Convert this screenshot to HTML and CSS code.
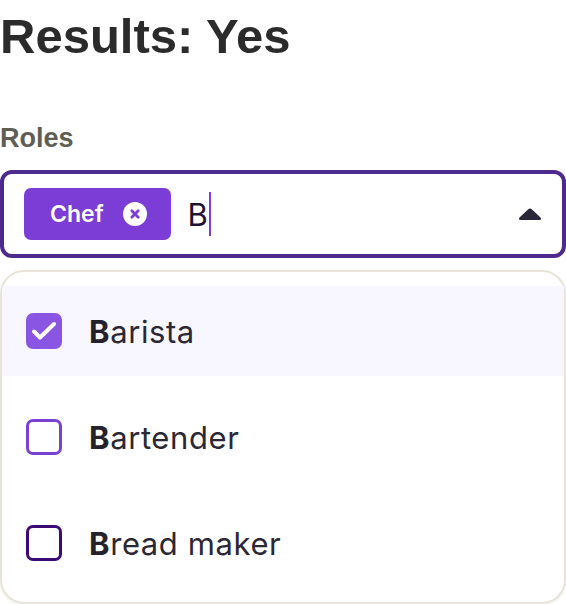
FILE: index.html
```html
<!DOCTYPE html>
<html lang="en">
<head>
<meta charset="utf-8">
<title>Results</title>
<link rel="stylesheet" href="styles.css">
</head>
<body>
<main class="page">
  <h1 class="title">Results: Yes</h1>
  <label class="label">Roles</label>
  <div class="combo">
    <span class="chip">
      <span class="chip-text">Chef</span>
      <svg class="chip-x" width="24" height="24" viewBox="0 0 24 24" aria-hidden="true">
        <circle cx="12" cy="12" r="12" fill="#ffffff"/>
        <path d="M8.8 8.8 L15.2 15.2 M15.2 8.8 L8.8 15.2" stroke="#7b3dd6" stroke-width="2.8" stroke-linecap="round"/>
      </svg>
    </span>
    <span class="typed">B</span><span class="cursor"></span>
    <svg class="caret" width="24" height="14" viewBox="0 0 24 14" aria-hidden="true">
      <path d="M12 1.5 Q13 1.5 14 2.5 L22.5 10.5 Q24 12.5 21.5 13 L2.5 13 Q0 12.5 1.5 10.5 L10 2.5 Q11 1.5 12 1.5 Z" fill="#2a2838"/>
    </svg>
  </div>
  <ul class="list">
    <li class="option active">
      <span class="box checked">
        <svg width="36" height="36" viewBox="0 0 36 36" aria-hidden="true">
          <path d="M8 18.5 L14 24.5 L28 11" fill="none" stroke="#ffffff" stroke-width="4" stroke-linecap="round" stroke-linejoin="round"/>
        </svg>
      </span>
      <span class="name"><b>B</b>arista</span>
    </li>
    <li class="option">
      <span class="box"></span>
      <span class="name"><b>B</b>artender</span>
    </li>
    <li class="option">
      <span class="box dark"></span>
      <span class="name"><b>B</b>read maker</span>
    </li>
  </ul>
</main>
</body>
</html>
```
FILE: styles.css
```css
* { box-sizing: border-box; }
html, body { margin: 0; padding: 0; background: #ffffff; }
body { font-family: "Inter", "Open Sans", sans-serif; }

.page { width: 566px; }

.title {
  margin: 8px 0 0;
  font-family: "Liberation Sans", Arial, sans-serif;
  font-weight: 700;
  font-size: 49px;
  line-height: 56px;
  color: #2b2b2b;
}

.label {
  display: block;
  margin-top: 58px;
  font-family: "Liberation Sans", Arial, sans-serif;
  font-weight: 700;
  font-size: 27px;
  line-height: 32px;
  color: #5f5e55;
}

.combo {
  margin-top: 16px;
  height: 88px;
  border: 4px solid #4e2a8e;
  border-radius: 12px;
  padding: 14px 20px;
  display: flex;
  align-items: center;
}

.chip {
  display: flex;
  align-items: center;
  height: 52px;
  padding: 0 24px 0 26px;
  background: #7b3dd6;
  border-radius: 7px;
  gap: 19px;
}
.chip-text {
  color: #ffffff;
  font-weight: 600;
  font-size: 23px;
}
.chip-x { display: block; }

.typed {
  margin-left: 17px;
  font-size: 31px;
  color: #1f1235;
}
.cursor {
  width: 2px;
  height: 44px;
  background: #7b3dd6;
  margin-left: 1px;
}
.caret { margin-left: auto; display: block; }

.list {
  list-style: none;
  margin: 12px 0 0;
  padding: 14px 0;
  border: 2px solid #e7e4d7;
  border-radius: 24px;
  box-shadow: 0 2px 3px rgba(0, 0, 0, 0.05);
  display: flex;
  flex-direction: column;
  gap: 16px;
}
.option {
  height: 90px;
  display: flex;
  align-items: center;
  padding-left: 24px;
  gap: 27px;
}
.option.active { background: #f8f6fe; }

.box {
  width: 36px;
  height: 36px;
  border: 3px solid #7a40d0;
  border-radius: 7px;
  flex: none;
}
.box.checked {
  border: none;
  background: #8b55e3;
}
.box.checked svg { display: block; }
.box.dark { border-color: #3c0a76; }

.name {
  font-size: 31px;
  letter-spacing: 0.6px;
  color: #2b2735;
}
.name b { font-weight: 700; color: #25222e; }
```
